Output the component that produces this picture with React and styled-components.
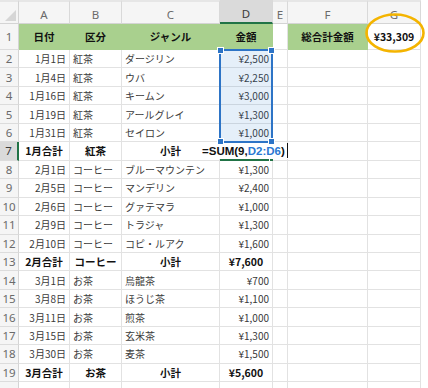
import React from "react";
import styled, { createGlobalStyle } from "styled-components";

const GlobalStyle = createGlobalStyle`
  html, body {
    margin: 0;
    background: #fff;
    overflow: hidden;
  }
  body {
    font-family: "Noto Sans CJK JP", "Noto Sans", sans-serif;
  }
`;

const COLS = [19, 51, 52, 98, 53, 15, 80, 53];
const LETTERS = ["A", "B", "C", "D", "E", "F", "G"];
const ROW_H = 18.46;
const GRID = "#e2e2e2";
const GREEN_FILL = "#a9d08e";
const EXCEL_GREEN = "#217346";
const BLUE = "#2d74c6";

const rows = [
  { cells: ["1月1日", "紅茶", "ダージリン", "¥2,500"] },
  { cells: ["1月4日", "紅茶", "ウバ", "¥2,250"] },
  { cells: ["1月16日", "紅茶", "キームン", "¥3,000"] },
  { cells: ["1月19日", "紅茶", "アールグレイ", "¥1,300"] },
  { cells: ["1月31日", "紅茶", "セイロン", "¥1,000"] },
  { cells: ["1月合計", "紅茶", "小計", ""], total: true, editing: true },
  { cells: ["2月1日", "コーヒー", "ブルーマウンテン", "¥1,300"] },
  { cells: ["2月5日", "コーヒー", "マンデリン", "¥2,400"] },
  { cells: ["2月6日", "コーヒー", "グァテマラ", "¥1,000"] },
  { cells: ["2月9日", "コーヒー", "トラジャ", "¥1,300"] },
  { cells: ["2月10日", "コーヒー", "コピ・ルアク", "¥1,600"] },
  { cells: ["2月合計", "コーヒー", "小計", "¥7,600"], total: true },
  { cells: ["3月1日", "お茶", "烏龍茶", "¥700"] },
  { cells: ["3月8日", "お茶", "ほうじ茶", "¥1,100"] },
  { cells: ["3月11日", "お茶", "煎茶", "¥1,000"] },
  { cells: ["3月15日", "お茶", "玄米茶", "¥1,300"] },
  { cells: ["3月30日", "お茶", "麦茶", "¥1,500"] },
  { cells: ["3月合計", "お茶", "小計", "¥5,600"], total: true },
];

const Sheet = styled.div`
  display: grid;
  grid-template-columns: ${COLS.map((c) => c + "px").join(" ")};
  grid-template-rows: 24px 26px repeat(19, ${ROW_H}px);
  width: 421px;
  height: 388px;
  position: relative;
`;

const Corner = styled.div`
  grid-area: 1 / 1;
  position: relative;
  background: #f5f5f5;
  border-top: 2px solid #e6e6e6;
  border-right: 1px solid #d4d4d4;
  border-bottom: 1px solid #d4d4d4;
  box-sizing: border-box;

  &::after {
    content: "";
    position: absolute;
    right: 2px;
    bottom: 2px;
    width: 11px;
    height: 11px;
    background: #d6d6d6;
    clip-path: polygon(100% 0, 100% 100%, 0 100%);
  }
`;

const ColHead = styled.div`
  grid-area: 1 / ${(p) => p.$col};
  display: flex;
  align-items: center;
  justify-content: center;
  padding-top: 3px;
  box-sizing: border-box;
  font-family: "Noto Sans", "DejaVu Sans", sans-serif;
  font-size: 11.5px;
  color: ${(p) => (p.$active ? "#3b3b3b" : "#6a6a6a")};
  background: ${(p) => (p.$active ? "#dadada" : "#f5f5f5")};
  border-top: 2px solid ${(p) => (p.$active ? "#dadada" : "#e6e6e6")};
  border-right: 1px solid #d9d9d9;
  border-bottom: ${(p) => (p.$active ? `2px solid ${EXCEL_GREEN}` : "1px solid #d4d4d4")};
`;

const RowHead = styled.div`
  grid-area: ${(p) => p.$row} / 1;
  display: flex;
  align-items: center;
  justify-content: center;
  box-sizing: border-box;
  font-family: "Noto Sans", "DejaVu Sans", sans-serif;
  font-size: 11.5px;
  color: ${(p) => (p.$active ? "#3b3b3b" : "#6a6a6a")};
  background: ${(p) => (p.$active ? "#dadada" : "#f5f5f5")};
  border-bottom: 1px solid #dcdcdc;
  border-right: ${(p) => (p.$active ? `2px solid ${EXCEL_GREEN}` : "1px solid #d4d4d4")};
`;

const justify = { left: "flex-start", right: "flex-end", center: "center" };

const Cell = styled.div`
  grid-area: ${(p) => p.$row} / ${(p) => p.$col};
  position: relative;
  display: flex;
  align-items: center;
  justify-content: ${(p) => justify[p.$align || "left"]};
  padding: 0 3px;
  box-sizing: border-box;
  white-space: nowrap;
  font-size: ${(p) => (p.$bold ? "10.5px" : "10px")};
  font-weight: ${(p) => (p.$bold ? 700 : 400)};
  color: ${(p) => (p.$bold ? "#111" : "#3a3a3a")};
  background: ${(p) => p.$fill || "#fff"};
  border-right: 1px solid ${(p) => p.$fill || GRID};
  border-bottom: 1px solid ${(p) => p.$fill || GRID};
`;

const ActiveCell = styled(Cell)`
  border-bottom: 2px solid ${EXCEL_GREEN};
`;

const Handle = styled.span`
  position: absolute;
  width: 5px;
  height: 5px;
  background: ${(p) => p.$color};
  border: 1px solid #fff;
  box-sizing: content-box;
  ${(p) => (p.$top ? "top: -4px;" : "bottom: -4px;")}
  ${(p) => (p.$left ? "left: -4px;" : "right: -4px;")}
`;

const Selection = styled.div`
  grid-area: 3 / 5 / 8 / 6;
  position: relative;
  z-index: 3;
  margin: -1px 0 -1px -1px;
  border: 2px solid ${BLUE};
  background: rgba(52, 128, 210, 0.13);
  pointer-events: none;
`;

const Editor = styled.div`
  grid-area: 8 / 4 / 9 / 7;
  justify-self: end;
  width: 86px;
  margin: 1px 0 2px;
  z-index: 2;
  display: flex;
  align-items: center;
  background: #fff;
  font-family: "Liberation Sans", Arial, sans-serif;
  font-size: 11.5px;
  font-weight: 700;
  color: #111;
  white-space: nowrap;
`;

const Ref = styled.span`
  color: #2a78d2;
`;

const Caret = styled.span`
  display: inline-block;
  width: 1px;
  height: 15px;
  margin-left: 2px;
  background: #111;
`;

const Ring = styled.svg`
  position: absolute;
  left: -3px;
  top: -11px;
  width: 60px;
  height: 40px;
  overflow: visible;
  z-index: 4;
  pointer-events: none;
`;

function GrandTotal() {
  return (
    <Cell $row={2} $col={8} $align="center" $bold>
      ¥33,309
      <Ring viewBox="0 0 60 40">
        <ellipse cx="30" cy="20" rx="28.5" ry="18.5" fill="none" stroke="#f4b400" strokeWidth="2.6" />
      </Ring>
    </Cell>
  );
}

function DataRow({ row, index }) {
  const r = index + 3;
  const [a, b, c, d] = row.cells;
  return (
    <>
      <RowHead $row={r} $active={row.editing}>{index + 2}</RowHead>
      <Cell $row={r} $col={2} $align={row.total ? "center" : "right"} $bold={row.total}>{a}</Cell>
      <Cell $row={r} $col={3} $align={row.total ? "center" : "left"} $bold={row.total}>{b}</Cell>
      <Cell $row={r} $col={4} $align={row.total ? "center" : "left"} $bold={row.total}>{c}</Cell>
      {row.editing ? (
        <ActiveCell $row={r} $col={5}>
          <Handle $color={EXCEL_GREEN} />
        </ActiveCell>
      ) : (
        <Cell $row={r} $col={5} $align={row.total ? "center" : "right"} $bold={row.total}>{d}</Cell>
      )}
      <Cell $row={r} $col={6} />
      <Cell $row={r} $col={7} />
      <Cell $row={r} $col={8} />
    </>
  );
}

export default function App() {
  return (
    <>
      <GlobalStyle />
      <Sheet>
        <Corner />
        {LETTERS.map((l, i) => (
          <ColHead key={l} $col={i + 2} $active={l === "D"}>{l}</ColHead>
        ))}

        <RowHead $row={2}>1</RowHead>
        <Cell $row={2} $col={2} $align="center" $bold $fill={GREEN_FILL}>日付</Cell>
        <Cell $row={2} $col={3} $align="center" $bold $fill={GREEN_FILL}>区分</Cell>
        <Cell $row={2} $col={4} $align="center" $bold $fill={GREEN_FILL}>ジャンル</Cell>
        <Cell $row={2} $col={5} $align="center" $bold $fill={GREEN_FILL}>金額</Cell>
        <Cell $row={2} $col={6} />
        <Cell $row={2} $col={7} $align="center" $bold $fill={GREEN_FILL}>総合計金額</Cell>
        <GrandTotal />

        {rows.map((row, i) => (
          <DataRow key={i} row={row} index={i} />
        ))}

        <RowHead $row={21} />
        {[2, 3, 4, 5, 6, 7, 8].map((c) => (
          <Cell key={c} $row={21} $col={c} />
        ))}

        <Editor>
          =SUM(9,<Ref>D2:D6</Ref>)
          <Caret />
        </Editor>

        <Selection>
          <Handle $color={BLUE} $top $left />
          <Handle $color={BLUE} $top />
          <Handle $color={BLUE} $left />
          <Handle $color={BLUE} />
        </Selection>
      </Sheet>
    </>
  );
}
